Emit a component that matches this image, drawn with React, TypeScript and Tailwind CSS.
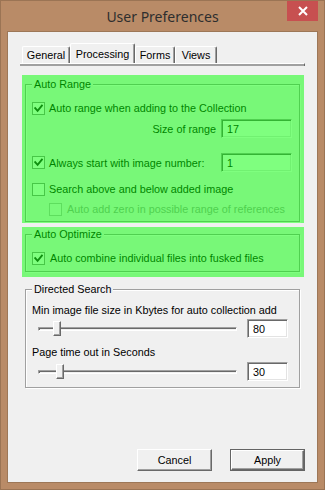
import React from "react";

const FONT = "font-['Liberation_Sans',Arial,sans-serif] text-[10.8px] leading-[14px] text-black";

function CheckBox({ checked = false, disabled = false }: { checked?: boolean; disabled?: boolean }) {
  return (
    <div
      className={
        disabled
          ? "w-[13px] h-[13px] shrink-0 border border-[#bcbcbc] bg-[#f4f4f4] flex items-center justify-center"
          : "w-[13px] h-[13px] shrink-0 border border-[#8e8f8f] bg-white flex items-center justify-center"
      }
    >
      {checked && (
        <svg width="9" height="9" viewBox="0 0 9 9">
          <path d="M1.2 4.2 L3.6 6.8 L7.9 1.6" stroke="#1e1e1e" strokeWidth="1.9" fill="none" strokeLinecap="square" />
        </svg>
      )}
    </div>
  );
}

function TextBox({ value, w }: { value: string; w: string }) {
  return (
    <div
      className={`${w} h-[19px] shrink-0 bg-white border border-t-[#a0a0a0] border-l-[#a0a0a0] border-b-white border-r-white shadow-[inset_1px_1px_0_#696969,inset_-1px_-1px_0_#e3e3e3] flex items-center pl-[5px]`}
    >
      {value}
    </div>
  );
}

function GroupBox({
  title,
  children,
  className,
}: {
  title: string;
  children: React.ReactNode;
  className: string;
}) {
  return (
    <div
      className={`${className} border border-[#a0a0a0] shadow-[inset_1px_1px_0_#ffffff,1px_1px_0_#ffffff] flex flex-col`}
    >
      <div className="-mt-[8px] ml-[6px] px-[2px] w-fit h-[14px] bg-[#f0f0f0]">{title}</div>
      {children}
    </div>
  );
}

function Slider({ thumb }: { thumb: number }) {
  return (
    <div className="relative w-[199px] h-[19px] flex items-center">
      <div className="w-full h-[4px] border border-t-[#a0a0a0] border-l-[#a0a0a0] border-b-white border-r-white shadow-[inset_1px_1px_0_#696969]" />
      <div
        className="absolute top-[2px] w-[8px] h-[15px] bg-[#f0f0f0] border border-t-white border-l-white border-b-[#696969] border-r-[#696969] shadow-[inset_-1px_-1px_0_#a0a0a0]"
        style={{ left: thumb }}
      />
    </div>
  );
}

function Tab({ label, w, selected = false }: { label: string; w: string; selected?: boolean }) {
  return (
    <div
      className={
        selected
          ? `${w} h-[20px] bg-[#f0f0f0] border-l border-t border-r border-l-white border-t-white border-r-[#696969] shadow-[inset_-1px_0_0_#a0a0a0] rounded-t-[2px] flex items-center justify-center`
          : `${w} h-[17px] bg-[#f0f0f0] border-l border-t border-r border-l-white border-t-white border-r-[#696969] shadow-[inset_-1px_0_0_#a0a0a0] rounded-t-[2px] flex items-center justify-center`
      }
    >
      {label}
    </div>
  );
}

function RaisedButton({ label, isDefault = false }: { label: string; isDefault?: boolean }) {
  const face = (
    <div className="w-full h-full bg-[#f0f0f0] border border-t-white border-l-white border-b-[#696969] border-r-[#696969] shadow-[inset_-1px_-1px_0_#a0a0a0] flex items-center justify-center">
      {label}
    </div>
  );
  if (isDefault) {
    return <div className="w-[75px] h-[22px] border border-[#646464]">{face}</div>;
  }
  return <div className="w-[75px] h-[22px]">{face}</div>;
}

export default function App() {
  return (
    <div className="w-[325px] h-[490px] bg-[#b98b67] border border-[#9b7454] px-[6px] flex flex-col">
      {/* Title bar */}
      <div className="h-[30px] flex shrink-0">
        <div className="w-[31px]" />
        <div className="flex-1 flex items-center justify-center font-['Noto_Sans',sans-serif] text-[14px] text-[#2e2e2e]">
          User Preferences
        </div>
        <div className="w-[31px] h-[20px] bg-[#c75050] flex items-center justify-center">
          <svg width="10" height="10" viewBox="0 0 10 10">
            <path d="M1 1 L9 9 M9 1 L1 9" stroke="#ffffff" strokeWidth="2" />
          </svg>
        </div>
      </div>

      {/* Client area */}
      <div className={`${FONT} h-[452px] border border-[#9d7757] bg-[#f0f0f0] flex flex-col px-[12px]`}>
        {/* Tabs */}
        <div className="mt-[11px] h-[20px] flex items-end pl-[2px] shrink-0">
          <Tab label="General" w="w-[48px]" />
          <Tab label="Processing" w="w-[65px]" selected />
          <Tab label="Forms" w="w-[40px]" />
          <Tab label="Views" w="w-[42px]" />
        </div>
        <div className="w-[285px] h-[3px] border-t border-t-white border-r border-r-[#696969] bg-[#a0a0a0] shrink-0" />

        {/* Auto Range */}
        <div className="relative mt-[9px] ml-[2px] w-[282px] pt-[9px] pl-[3px] pb-[1px] shrink-0">
          <GroupBox title="Auto Range" className="w-[275px] pb-[4px]">
            <div className="mt-[9px] h-[16px] pl-[6px] flex items-center gap-[4px]">
              <CheckBox checked />
              <span>Auto range when adding to the Collection</span>
            </div>
            <div className="mt-[3px] h-[19px] pr-[7px] flex items-center justify-end gap-[5px]">
              <span>Size of range</span>
              <TextBox value="17" w="w-[71px]" />
            </div>
            <div className="mt-[15px] h-[19px] pl-[6px] pr-[7px] flex items-center gap-[4px]">
              <CheckBox checked />
              <span>Always start with image number:</span>
              <div className="ml-auto">
                <TextBox value="1" w="w-[71px]" />
              </div>
            </div>
            <div className="mt-[9px] h-[16px] pl-[6px] flex items-center gap-[4px]">
              <CheckBox />
              <span>Search above and below added image</span>
            </div>
            <div className="mt-[4px] h-[16px] pl-[23px] flex items-center gap-[5px] text-[#a0a0a0]">
              <CheckBox disabled />
              <span>Auto add zero in possible range of references</span>
            </div>
          </GroupBox>
          <div className="absolute inset-0 bg-[#00ff00]/50 pointer-events-none" />
        </div>

        {/* Auto Optimize */}
        <div className="relative mt-[4px] ml-[2px] w-[282px] pt-[7px] pl-[3px] pb-[5px] shrink-0">
          <GroupBox title="Auto Optimize" className="w-[275px] pb-[5px]">
            <div className="mt-[9px] h-[16px] pl-[6px] flex items-center gap-[5px]">
              <CheckBox checked />
              <span>Auto combine individual files into fusked files</span>
            </div>
          </GroupBox>
          <div className="absolute inset-0 bg-[#00ff00]/50 pointer-events-none" />
        </div>

        {/* Directed Search */}
        <GroupBox title="Directed Search" className="mt-[12px] ml-[5px] w-[275px] pb-[6px] shrink-0">
          <div className="mt-[7px] h-[14px] pl-[6px]">Min image file size in Kbytes for auto collection add</div>
          <div className="mt-[2px] h-[19px] pl-[12px] flex items-center gap-[10px]">
            <Slider thumb={15} />
            <TextBox value="80" w="w-[41px]" />
          </div>
          <div className="mt-[7px] h-[14px] pl-[6px]">Page time out in Seconds</div>
          <div className="mt-[3px] h-[19px] pl-[12px] flex items-center gap-[10px]">
            <Slider thumb={18} />
            <TextBox value="30" w="w-[41px]" />
          </div>
        </GroupBox>

        {/* Buttons */}
        <div className="mt-auto mb-[11px] flex justify-end gap-[18px]">
          <RaisedButton label="Cancel" />
          <RaisedButton label="Apply" isDefault />
        </div>
      </div>
    </div>
  );
}
